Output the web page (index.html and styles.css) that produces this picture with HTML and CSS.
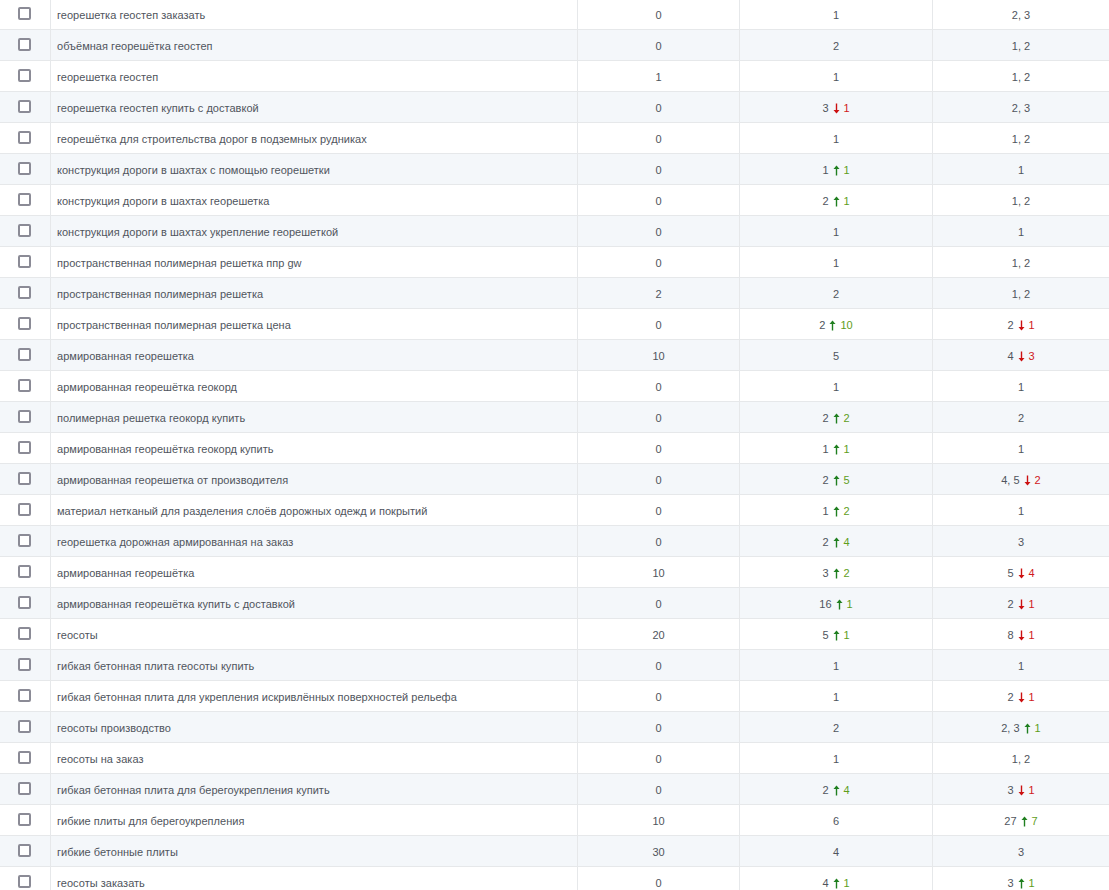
FILE: index.html
```html
<!DOCTYPE html>
<html lang="ru">
<head>
<meta charset="utf-8">
<title>Позиции</title>
<link rel="stylesheet" href="styles.css">
</head>
<body>
<div class="table" id="t"></div>
<script>
var data = [
["георешетка геостеп заказать","0","1","","2, 3",""],
["объёмная георешётка геостеп","0","2","","1, 2",""],
["георешетка геостеп","1","1","","1, 2",""],
["георешетка геостеп купить с доставкой","0","3","-1","2, 3",""],
["георешётка для строительства дорог в подземных рудниках","0","1","","1, 2",""],
["конструкция дороги в шахтах с помощью георешетки","0","1","+1","1",""],
["конструкция дороги в шахтах георешетка","0","2","+1","1, 2",""],
["конструкция дороги в шахтах укрепление георешеткой","0","1","","1",""],
["пространственная полимерная решетка ппр gw","0","1","","1, 2",""],
["пространственная полимерная решетка","2","2","","1, 2",""],
["пространственная полимерная решетка цена","0","2","+10","2","-1"],
["армированная георешетка","10","5","","4","-3"],
["армированная георешётка геокорд","0","1","","1",""],
["полимерная решетка геокорд купить","0","2","+2","2",""],
["армированная георешётка геокорд купить","0","1","+1","1",""],
["армированная георешетка от производителя","0","2","+5","4, 5","-2"],
["материал нетканый для разделения слоёв дорожных одежд и покрытий","0","1","+2","1",""],
["георешетка дорожная армированная на заказ","0","2","+4","3",""],
["армированная георешётка","10","3","+2","5","-4"],
["армированная георешётка купить с доставкой","0","16","+1","2","-1"],
["геосоты","20","5","+1","8","-1"],
["гибкая бетонная плита геосоты купить","0","1","","1",""],
["гибкая бетонная плита для укрепления искривлённых поверхностей рельефа","0","1","","2","-1"],
["геосоты производство","0","2","","2, 3","+1"],
["геосоты на заказ","0","1","","1, 2",""],
["гибкая бетонная плита для берегоукрепления купить","0","2","+4","3","-1"],
["гибкие плиты для берегоукрепления","10","6","","27","+7"],
["гибкие бетонные плиты","30","4","","3",""],
["геосоты заказать","0","4","+1","3","+1"]
];
var up = '<svg class="arr" width="7" height="11" viewBox="0 0 7 11"><path d="M3.5 10.5V2.5" stroke="currentColor" stroke-width="1.4" fill="none"/><path d="M0.5 4L3.5 0.5L6.5 4Z" fill="currentColor"/></svg>';
var down = '<svg class="arr" width="7" height="11" viewBox="0 0 7 11"><path d="M3.5 0.5V8.5" stroke="currentColor" stroke-width="1.4" fill="none"/><path d="M0.5 7L3.5 10.5L6.5 7Z" fill="currentColor"/></svg>';
function pos(v, d) {
  var h = '<span class="val">' + v + '</span>';
  if (d) {
    if (d[0] === '+') h += '<span class="chg up">' + up + '<span>' + d.slice(1) + '</span></span>';
    else h += '<span class="chg down">' + down + '<span>' + d.slice(1) + '</span></span>';
  }
  return h;
}
var html = '';
data.forEach(function (r) {
  html += '<div class="row">' +
    '<div class="cell chk"><span class="box"></span></div>' +
    '<div class="cell name">' + r[0] + '</div>' +
    '<div class="cell num">' + r[1] + '</div>' +
    '<div class="cell num">' + pos(r[2], r[3]) + '</div>' +
    '<div class="cell num">' + pos(r[4], r[5]) + '</div>' +
    '</div>';
});
document.getElementById('t').innerHTML = html;
</script>
</body>
</html>
```

FILE: styles.css
```css
html, body {
  margin: 0;
  padding: 0;
  background: #fff;
}
body {
  font-family: "Liberation Sans", Arial, sans-serif;
  font-size: 11px;
  color: #50555d;
}
.table {
  margin-top: -2px;
}
.row {
  display: grid;
  grid-template-columns: 50px 527px 162px 193px 1fr;
  height: 31px;
  box-sizing: border-box;
  border-top: 1px solid #e6e8ea;
  background: #fff;
}
.row:nth-child(even) {
  background: #f4f7fa;
}
.cell {
  display: flex;
  align-items: center;
  box-sizing: border-box;
  border-left: 1px solid #e6e8ea;
  padding-top: 2px;
}
.cell.chk {
  border-left: none;
  padding-left: 18px;
  padding-top: 0;
  padding-bottom: 1px;
}
.box {
  width: 13px;
  height: 13px;
  box-sizing: border-box;
  border: 2px solid #8b8b96;
  border-radius: 2px;
  background: #fff;
}
.cell.name {
  padding-left: 6px;
  letter-spacing: 0.03px;
}
.cell.num {
  justify-content: center;
}
.chg {
  display: inline-flex;
  align-items: center;
  margin-left: 4px;
}
.arr {
  margin-right: 4px;
}
.chg.up .arr { color: #1f7f1f; }
.chg.up span { color: #5f9e1c; }
.chg.down .arr { color: #cc1010; }
.chg.down span { color: #d01822; }
```
